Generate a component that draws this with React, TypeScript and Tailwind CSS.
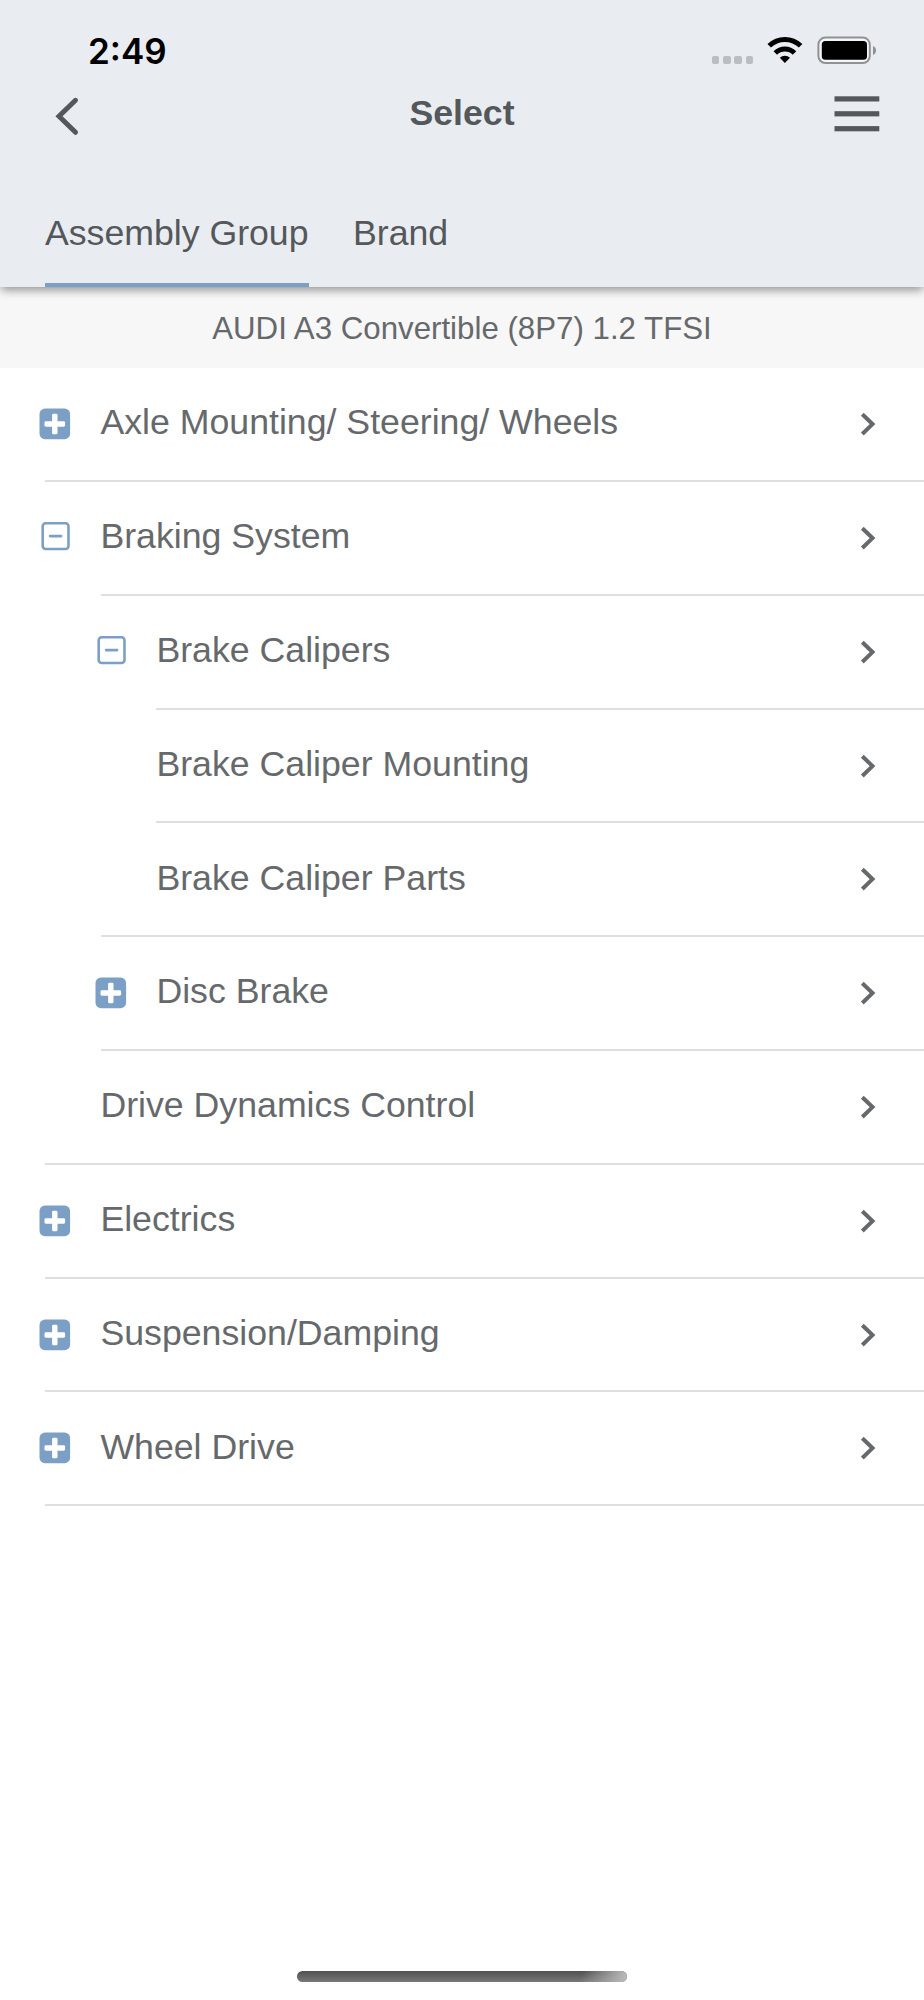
import React from 'react';

type Toggle = 'plus' | 'minus' | 'none';

interface TreeRow {
  label: string;
  toggle: Toggle;
  indent: string;
  divider: string;
}

const rows: TreeRow[] = [
  { label: 'Axle Mounting/ Steering/ Wheels', toggle: 'plus', indent: 'pl-[39px]', divider: 'ml-[45px]' },
  { label: 'Braking System', toggle: 'minus', indent: 'pl-[39px]', divider: 'ml-[101px]' },
  { label: 'Brake Calipers', toggle: 'minus', indent: 'pl-[95px]', divider: 'ml-[156px]' },
  { label: 'Brake Caliper Mounting', toggle: 'none', indent: 'pl-[95px]', divider: 'ml-[156px]' },
  { label: 'Brake Caliper Parts', toggle: 'none', indent: 'pl-[95px]', divider: 'ml-[101px]' },
  { label: 'Disc Brake', toggle: 'plus', indent: 'pl-[95px]', divider: 'ml-[101px]' },
  { label: 'Drive Dynamics Control', toggle: 'none', indent: 'pl-[39px]', divider: 'ml-[45px]' },
  { label: 'Electrics', toggle: 'plus', indent: 'pl-[39px]', divider: 'ml-[45px]' },
  { label: 'Suspension/Damping', toggle: 'plus', indent: 'pl-[39px]', divider: 'ml-[45px]' },
  { label: 'Wheel Drive', toggle: 'plus', indent: 'pl-[39px]', divider: 'ml-[45px]' },
];

const ToggleIcon: React.FC<{ type: Toggle }> = ({ type }) => {
  if (type === 'plus') {
    return (
      <svg width="32" height="32" viewBox="0 0 32 32">
        <rect x="0.5" y="0.6" width="30.6" height="30.6" rx="5.5" fill="#7c9fc6" />
        <rect x="13.1" y="5.7" width="5.4" height="20.6" rx="1.4" fill="#fff" />
        <rect x="5.5" y="13.3" width="20.6" height="5.4" rx="1.4" fill="#fff" />
      </svg>
    );
  }
  if (type === 'minus') {
    return (
      <svg width="32" height="32" viewBox="0 0 32 32">
        <rect x="3.7" y="1.2" width="25.8" height="25.8" rx="3" fill="none" stroke="#7c9fc6" strokeWidth="2.6" />
        <path d="M11.1 14.1h11" stroke="#7c9fc6" strokeWidth="2.6" strokeLinecap="round" />
      </svg>
    );
  }
  return null;
};

const StatusBar: React.FC = () => (
  <div className="flex h-[82px] items-start justify-between pl-[88px] pr-[47px] pt-[30px]">
    <span className="font-['Inter',sans-serif] text-[35px] font-semibold leading-[42px] text-black">2:49</span>
    <div className="flex pt-[6px]">
      <div className="mr-[14px] flex gap-[3.7px] pt-5">
        <span className="h-[7.5px] w-[7.5px] rounded-[2px] bg-[#babdc2]" />
        <span className="h-[7.5px] w-[7.5px] rounded-[2px] bg-[#babdc2]" />
        <span className="h-[7.5px] w-[7.5px] rounded-[2px] bg-[#babdc2]" />
        <span className="h-[7.5px] w-[7.5px] rounded-[2px] bg-[#babdc2]" />
      </div>
      <svg className="mr-[14px]" width="36" height="28" viewBox="0 0 36 28" fill="none" stroke="#000">
        <path d="M2.2 9.8a22.5 22.5 0 0 1 31.4 0" strokeWidth="5" />
        <path d="M8.3 16.9a13.6 13.6 0 0 1 19.2 0" strokeWidth="5" />
        <path d="M12.8 21.8a7.6 7.6 0 0 1 10.2 0l-5.1 5.3z" fill="#000" stroke="none" />
      </svg>
      <svg width="60" height="28" viewBox="0 0 60 28">
        <rect x="1.4" y="1.6" width="51.4" height="25.4" rx="7" fill="#f4f6f8" stroke="#8f9295" strokeWidth="2" />
        <rect x="4.8" y="5" width="45.2" height="18.8" rx="3.6" fill="#000" />
        <path d="M56 10c4 1.2 4 7.6 0 9z" fill="#8f9295" />
      </svg>
    </div>
  </div>
);

const App: React.FC = () => {
  return (
    <div className="flex h-[2000px] w-[924px] flex-col overflow-hidden bg-white font-['Liberation_Sans',Arial,sans-serif] text-[35.7px] text-[#66696c]">
      <header className="z-10 flex h-[287px] shrink-0 flex-col bg-[#e9edf2] text-[#54585a] shadow-[0_4px_9px_-1px_rgba(0,0,0,0.42)]">
        <StatusBar />

        <div className="grid h-[76px] grid-cols-3 pt-[11px]">
          <svg className="ml-[54px] mt-[2px]" width="28" height="42" viewBox="0 0 28 42" fill="none">
            <path d="M21.5 5.3L5 21.3l16.5 16" stroke="#54585a" strokeWidth="5" strokeLinecap="round" />
          </svg>
          <h1 className="text-center font-bold leading-[41px]">Select</h1>
          <svg className="mr-[44px] mt-[3px] justify-self-end" width="46" height="36" viewBox="0 0 46 36" fill="#54585a">
            <rect x="0.5" y="0.3" width="44.8" height="5.2" />
            <rect x="0.5" y="15.2" width="44.8" height="5.2" />
            <rect x="0.5" y="30.1" width="44.8" height="5.2" />
          </svg>
        </div>

        <nav className="flex flex-1 gap-[44.5px] pl-[45px]">
          <div className="border-b-4 border-[#7c9fc6] pt-[55px] leading-[41px] tracking-[-0.02px]">Assembly Group</div>
          <div className="pt-[55px] leading-[41px] tracking-[-0.02px]">Brand</div>
        </nav>
      </header>

      <div className="h-[81.3px] shrink-0 bg-[#f7f7f7] pt-6 text-center text-[31.25px] leading-9">
        AUDI A3 Convertible (8P7) 1.2 TFSI
      </div>

      <main className="flex-1">
        {rows.map((row) => (
          <div key={row.label} className="flex h-[113.8px] flex-col">
            <div className={`flex flex-1 items-center pr-[47px] ${row.indent}`}>
              <div className="w-[61.4px] shrink-0">
                <ToggleIcon type={row.toggle} />
              </div>
              <span className="flex-1 pb-[2.6px] leading-[41px]">{row.label}</span>
              <svg width="18" height="24" viewBox="0 0 18 24" fill="none">
                <path d="M3.3 2.2l10.2 9.9-10.2 9.9" stroke="#66696c" strokeWidth="4" />
              </svg>
            </div>
            <div className={`h-[2px] shrink-0 bg-[#dfdfdf] ${row.divider}`} />
          </div>
        ))}
      </main>

      {/* home indicator */}
      <div className="mb-[18px] flex shrink-0 justify-center">
        <div className="h-[11px] w-[330px] overflow-hidden rounded-full bg-gradient-to-b from-[#505050] to-[#787878]">
          <div className="ml-auto h-full w-[60px] bg-[linear-gradient(105deg,transparent_25%,#b8b8b8_95%)]" />
        </div>
      </div>
    </div>
  );
};

export default App;
